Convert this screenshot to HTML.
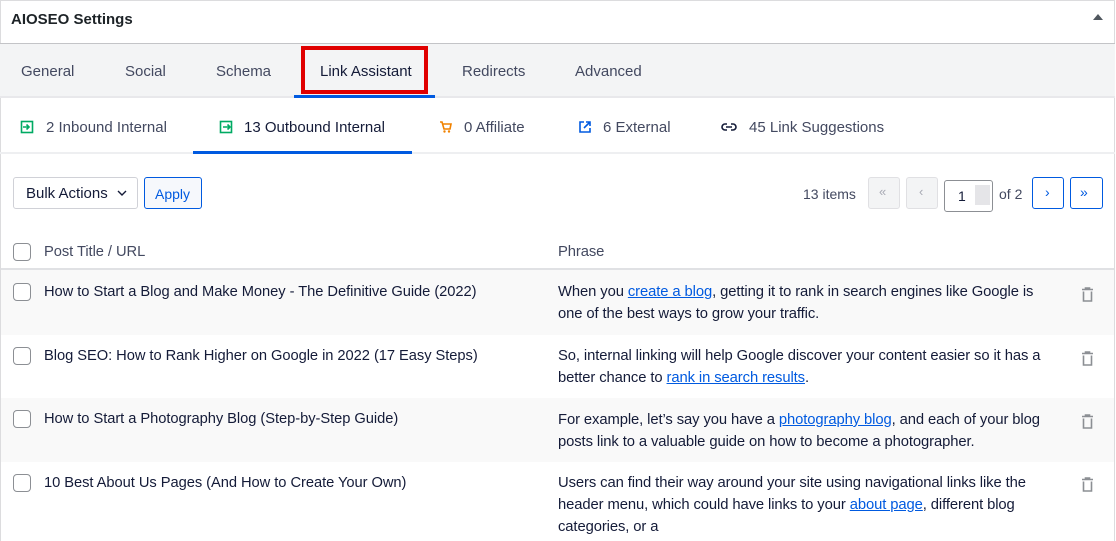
<!DOCTYPE html>
<html><head><meta charset="utf-8"><style>
*{box-sizing:border-box;margin:0;padding:0}
body{width:1116px;height:541px;overflow:hidden;background:#fff;font-family:"Liberation Sans",sans-serif;color:#141b38;position:relative}
.abs{position:absolute;white-space:nowrap}
.panel{position:absolute;left:0;top:0;width:1115px;height:541px;border-right:1px solid #dcdcde;border-left:1px solid #dcdcde;border-top:1px solid #dcdcde}
.hdr{position:absolute;left:0;top:0;width:1115px;height:44px;border-bottom:1px solid #c3c4c7}
.tabs{position:absolute;left:0;top:44px;width:1115px;height:54px;background:#f3f4f5;border-bottom:2px solid #e8e8eb}
.t{position:absolute;top:19px;font-size:15px;color:#434960}
.sub{position:absolute;top:119px;font-size:15px;color:#434960}
.btn{position:absolute;border:1px solid #d0d1d7;border-radius:3px;background:#fff}
.row{position:absolute;left:1px;width:1113px}
.cb{position:absolute;left:12px;width:18px;height:18px;border:1px solid #8c8f94;border-radius:4px;background:#fff}
.cell{position:absolute;left:43px;font-size:14.7px;letter-spacing:-0.05px;color:#141b38;white-space:nowrap}
.ph{position:absolute;left:557px;font-size:14.8px;letter-spacing:-0.1px;line-height:22px;color:#141b38;white-space:nowrap}
a{color:#005ae0;text-decoration:underline}
.trash{position:absolute;left:1080px}
</style></head><body>
<div class="panel"></div>
<div class="hdr"><div class="abs" style="left:11px;top:11px;font-size:15px;font-weight:bold;color:#1d2327">AIOSEO Settings</div>
<svg class="abs" style="left:1093px;top:13px" width="10" height="8"><path d="M0 7L5 1L10 7Z" fill="#50575e"/></svg></div>
<div class="tabs">
<div class="t" style="left:21px">General</div>
<div class="t" style="left:125px">Social</div>
<div class="t" style="left:216px">Schema</div>
<div class="t" style="left:320px;color:#141b38">Link Assistant</div>
<div class="t" style="left:462px">Redirects</div>
<div class="t" style="left:575px">Advanced</div>
<div class="abs" style="left:294px;top:51px;width:141px;height:3px;background:#005ae0"></div>
<div class="abs" style="left:301px;top:2px;width:127px;height:48px;border:4px solid #e00000"></div>
</div>
<div class="abs" style="left:0;top:152px;width:1115px;height:2px;background:#eeeff1"></div>
<svg class="abs" style="left:20px;top:120px" width="14" height="14" viewBox="0 0 14 14"><rect x="1.5" y="1.5" width="11" height="11" fill="none" stroke="#00aa63" stroke-width="1.6"/><path d="M3 7H9M6.5 4.5L9 7L6.5 9.5" stroke="#00aa63" stroke-width="1.6" fill="none"/></svg>
<div class="sub" style="left:46px">2 Inbound Internal</div>
<svg class="abs" style="left:219px;top:120px" width="14" height="14" viewBox="0 0 14 14"><rect x="1.5" y="1.5" width="11" height="11" fill="none" stroke="#00aa63" stroke-width="1.6"/><path d="M4 7H11M8.5 4.5L11 7L8.5 9.5" stroke="#00aa63" stroke-width="1.6" fill="none"/></svg>
<div class="sub" style="left:244px;color:#141b38">13 Outbound Internal</div>
<div class="abs" style="left:193px;top:151px;width:219px;height:3px;background:#005ae0"></div>
<svg class="abs" style="left:439px;top:120px" width="14" height="14" viewBox="0 0 14 14"><path d="M1 2H3L5 9H11L12 4H4" stroke="#f18200" stroke-width="1.6" fill="none"/><circle cx="5.5" cy="11.5" r="1.2" fill="#f18200"/><circle cx="10" cy="11.5" r="1.2" fill="#f18200"/></svg>
<div class="sub" style="left:464px">0 Affiliate</div>
<svg class="abs" style="left:578px;top:120px" width="14" height="14" viewBox="0 0 14 14"><path d="M6 2H2V12H12V8" stroke="#005ae0" stroke-width="1.6" fill="none"/><path d="M8 2H12V6M12 2L6 8" stroke="#005ae0" stroke-width="1.6" fill="none"/></svg>
<div class="sub" style="left:603px">6 External</div>
<svg class="abs" style="left:721px;top:121px" width="16" height="12" viewBox="0 0 16 12"><path d="M6 3H4A3 3 0 0 0 4 9H6M10 3H12A3 3 0 0 1 12 9H10M5 6H11" stroke="#141b38" stroke-width="1.6" fill="none"/></svg>
<div class="sub" style="left:749px">45 Link Suggestions</div>

<div class="btn" style="left:13px;top:177px;width:125px;height:32px"></div>
<div class="abs" style="left:26px;top:185px;font-size:15px;color:#141b38">Bulk Actions</div>
<svg class="abs" style="left:117px;top:190px" width="10" height="6"><path d="M1 1L5 5L9 1" stroke="#141b38" stroke-width="1.4" fill="none"/></svg>
<div class="btn" style="left:144px;top:177px;width:58px;height:32px;border-color:#005ae0;background:#f6f8fc"></div>
<div class="abs" style="left:155px;top:186px;font-size:14px;color:#005ae0">Apply</div>

<div class="abs" style="left:803px;top:186px;font-size:14px;color:#434960">13 items</div>
<div class="btn" style="left:868px;top:177px;width:32px;height:32px;background:#f3f4f5;border-color:#e0e0e3"></div>
<div class="abs" style="left:879px;top:184px;font-size:13px;color:#a7a9b3">«</div>
<div class="btn" style="left:906px;top:177px;width:32px;height:32px;background:#f3f4f5;border-color:#e0e0e3"></div>
<div class="abs" style="left:919px;top:184px;font-size:13px;color:#a7a9b3">‹</div>
<div class="btn" style="left:944px;top:180px;width:49px;height:32px;border-color:#8c8f94"></div>
<div class="abs" style="left:958px;top:188px;font-size:14px">1</div>
<div class="abs" style="left:975px;top:185px;width:15px;height:20px;background:#e5e5e8"></div>
<div class="abs" style="left:999px;top:186px;font-size:14px;color:#434960">of 2</div>
<div class="btn" style="left:1032px;top:177px;width:32px;height:32px;border-color:#005ae0"></div>
<div class="abs" style="left:1045px;top:184px;font-size:14px;color:#005ae0">›</div>
<div class="btn" style="left:1070px;top:177px;width:33px;height:32px;border-color:#005ae0"></div>
<div class="abs" style="left:1080px;top:184px;font-size:14px;color:#005ae0">»</div>

<div class="row" style="top:233px;height:37px;border-bottom:2px solid #e0e1e4"><div class="cb" style="top:10px"></div><div class="cell" style="top:11px;color:#434960">Post Title / URL</div><div class="ph" style="top:8px;color:#434960">Phrase</div></div>
<div class="row" style="top:270px;height:65px;background:#f9f9f9"><div class="cb" style="top:13px"></div><div class="cell" style="top:14px">How to Start a Blog and Make Money - The Definitive Guide (2022)</div><div class="ph" style="top:11px">When you <a>create a blog</a>, getting it to rank in search engines like Google is<br>one of the best ways to grow your traffic.</div>
<svg class="trash" style="top:17px" width="13" height="15" viewBox="0 0 13 15"><path d="M1 2.5H12M4.5 2.5V1H8.5V2.5M2.5 4.5V14H10.5V4.5" stroke="#8c8f94" stroke-width="1.6" fill="none"/></svg></div>
<div class="row" style="top:335px;height:63px"><div class="cb" style="top:12px"></div><div class="cell" style="top:13px">Blog SEO: How to Rank Higher on Google in 2022 (17 Easy Steps)</div><div class="ph" style="top:10px">So, internal linking will help Google discover your content easier so it has a<br>better chance to <a>rank in search results</a>.</div>
<svg class="trash" style="top:16px" width="13" height="15" viewBox="0 0 13 15"><path d="M1 2.5H12M4.5 2.5V1H8.5V2.5M2.5 4.5V14H10.5V4.5" stroke="#8c8f94" stroke-width="1.6" fill="none"/></svg></div>
<div class="row" style="top:398px;height:64px;background:#f9f9f9"><div class="cb" style="top:12px"></div><div class="cell" style="top:13px">How to Start a Photography Blog (Step-by-Step Guide)</div><div class="ph" style="top:11px">For example, let’s say you have a <a>photography blog</a>, and each of your blog<br>posts link to a valuable guide on how to become a photographer.</div>
<svg class="trash" style="top:16px" width="13" height="15" viewBox="0 0 13 15"><path d="M1 2.5H12M4.5 2.5V1H8.5V2.5M2.5 4.5V14H10.5V4.5" stroke="#8c8f94" stroke-width="1.6" fill="none"/></svg></div>
<div class="row" style="top:462px;height:79px"><div class="cb" style="top:12px"></div><div class="cell" style="top:13px">10 Best About Us Pages (And How to Create Your Own)</div><div class="ph" style="top:10px">Users can find their way around your site using navigational links like the<br>header menu, which could have links to your <a>about page</a>, different blog<br>categories, or a</div>
<svg class="trash" style="top:15px" width="13" height="15" viewBox="0 0 13 15"><path d="M1 2.5H12M4.5 2.5V1H8.5V2.5M2.5 4.5V14H10.5V4.5" stroke="#8c8f94" stroke-width="1.6" fill="none"/></svg></div>
</body></html>
